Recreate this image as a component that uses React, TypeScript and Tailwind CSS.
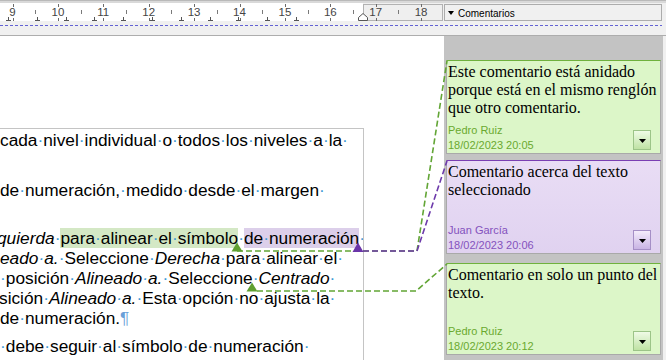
import React from 'react';

type Run = { t: string; i?: boolean; hl?: 'g' | 'p'; mark?: boolean };

// texto del documento, línea por línea (los puntos son los espacios visibles)
const docLines: { cls: string; runs: Run[] }[] = [
  { cls: 'mt-[1px]', runs: [{ t: 'cada·nivel·individual·o·todos·los·niveles·a·la·' }] },
  { cls: 'mt-[30px]', runs: [{ t: 'de·numeración,·medido·desde·el·margen·' }] },
  {
    cls: 'mt-[28px] -ml-[3px]',
    runs: [
      { t: 'quierda', i: true },
      { t: '·' },
      { t: 'para·alinear·el·símbolo', hl: 'g' },
      { t: '·' },
      { t: 'de·numeración', hl: 'p' },
      { t: '·' },
    ],
  },
  { cls: '', runs: [{ t: 'eado·a.', i: true }, { t: '·Seleccione·' }, { t: 'Derecha', i: true }, { t: '·para·alinear·el·' }] },
  { cls: '', runs: [{ t: '·posición·' }, { t: 'Alineado·a.', i: true }, { t: '·Seleccione·' }, { t: 'Centrado', i: true }, { t: '·' }] },
  { cls: '-ml-[1px]', runs: [{ t: 'sición·' }, { t: 'Alineado·a.', i: true }, { t: '·Esta·opción·no·ajusta·la·' }] },
  { cls: '', runs: [{ t: 'de·numeración.' }, { t: '¶', mark: true }] },
  { cls: 'mt-[8px]', runs: [{ t: '·debe·seguir·al·símbolo·de·numeración·' }] },
];

const Runs = ({ runs }: { runs: Run[] }) => (
  <>
    {runs.map((r, k) => {
      if (r.mark) return <span key={k} className="text-[#6a9fd8]">{r.t}</span>;
      const parts = r.t.split(/(·)/);
      const cls = [
        r.i ? 'italic' : '',
        r.hl === 'g' ? 'bg-[#d4e8c5]' : '',
        r.hl === 'p' ? 'bg-[#dccfea]' : '',
      ].join(' ');
      return (
        <span key={k} className={cls}>
          {parts.map((p, j) => (p === '·' ? <span key={j} className="text-[#3f9bd5]">·</span> : p))}
        </span>
      );
    })}
  </>
);

const Ruler = () => {
  const nums = [9, 10, 11, 12, 13, 14, 15, 16, 17, 18];
  const tabs = Array.from({ length: 11 }, (_, k) => Math.round(8 + k * 28.8) + 0.5);
  return (
    <svg width="443" height="18" className="block shrink-0">
      <rect x="0" y="0" width="363" height="18" fill="#ffffff" />
      <rect x="363.5" y="1.5" width="79" height="16" fill="#efefef" stroke="#b2b2b2" />
      {nums.map((n, k) => {
        const x = 12.5 + k * 45.4;
        const xi = Math.round(x) + 0.5;
        const mid = Math.round(x + 22.7) + 0.5;
        return (
          <g key={n}>
            <line x1={xi} y1="1" x2={xi} y2="4" stroke="#6b6b6b" />
            <line x1={xi} y1="15" x2={xi} y2="18" stroke="#6b6b6b" />
            {k < 9 && <line x1={mid} y1="7" x2={mid} y2="11" stroke="#7a7a7a" />}
            <text
              x={x}
              y="12.5"
              textAnchor="middle"
              fontSize="11.5"
              fill="#444444"
              fontFamily="'Liberation Sans', Arial, sans-serif"
            >
              {n}
            </text>
          </g>
        );
      })}
      {tabs.map((x) => (
        <g key={x} stroke="#555555">
          <line x1={x} y1="14" x2={x} y2="17.5" />
          <line x1={x - 2.5} y1="17.5" x2={x + 2.5} y2="17.5" />
        </g>
      ))}
      {/* sangría derecha */}
      <polygon points="363,10.5 367.5,14.5 367.5,17.5 358.5,17.5 358.5,14.5" fill="#ffffff" stroke="#555555" />
    </svg>
  );
};

type Tone = 'green' | 'purple';

const CommentCard = ({
  lines,
  author,
  date,
  tone,
  h,
  mt,
}: {
  lines: string[];
  author: string;
  date: string;
  tone: Tone;
  h: string;
  mt: string;
}) => {
  const green = tone === 'green';
  return (
    <div
      className={[
        'flex flex-col justify-between border border-[#a9a9a9]',
        h,
        mt,
        green ? 'border-t-[#6fb13d] bg-[#dcf6c8]' : 'border-t-[#7a3fb3] bg-gradient-to-b from-[#e9ddf5] to-[#e0d2f0]',
      ].join(' ')}
    >
      <div className="pl-[1px] pt-[2px] font-['Liberation_Serif',serif] text-[16px] leading-[18px] text-black">
        {lines.map((l) => (
          <div key={l} className="whitespace-nowrap">
            {l}
          </div>
        ))}
      </div>
      <div className="flex items-end justify-between">
        <div className={['pl-[1px] text-[11px] leading-[15px]', green ? 'text-[#6aa92f]' : 'text-[#8452bd]'].join(' ')}>
          <div>{author}</div>
          <div>{date}</div>
        </div>
        <div
          className={[
            'mb-[3px] mr-[9px] flex h-[20px] w-[18px] items-center justify-center border',
            green
              ? 'border-[#9cc488] bg-gradient-to-b from-[#effbe6] to-[#bfe2a4]'
              : 'border-[#a58fc6] bg-gradient-to-b from-[#f4ecfb] to-[#c9b4e4]',
          ].join(' ')}
        >
          <svg width="7" height="4" className="mt-[2px]">
            <polygon points="0,0 7,0 3.5,4" fill="#000000" />
          </svg>
        </div>
      </div>
    </div>
  );
};

export default function App() {
  return (
    <div className="relative h-[360px] w-[666px] overflow-hidden bg-[#f0f0f0] font-['Liberation_Sans',Arial,sans-serif]">
      {/* borde superior */}
      <div className="h-[3px] border-t border-[#b9b9b9] bg-[#d9d9d9]" />

      {/* regla */}
      <div className="flex h-[18px]">
        <Ruler />
        <div className="ml-[1px] mt-[1px] flex h-[17px] w-[218px] items-center gap-[4px] border border-[#acacac] bg-[#f0f0f0] pl-[3px] text-[10px] text-black">
          <svg width="6" height="4" className="mt-[1px]">
            <polygon points="0,0 6,0 3,4" fill="#000000" />
          </svg>
          <span className="pt-[1px]">Comentarios</span>
        </div>
      </div>

      {/* línea de límite punteada */}
      <div className="h-[15px] border-b border-[#adadad]">
        <svg width="662" height="14" className="block">
          <line x1="0" y1="4.5" x2="662" y2="4.5" stroke="#6262d4" strokeDasharray="3 2" />
        </svg>
      </div>

      <div className="flex h-[324px]">
        {/* documento */}
        <div className="w-[444px] overflow-hidden bg-white">
          <div className="mt-[92px] h-[300px] w-[364px] overflow-hidden border-r border-t border-[#c4c4c4] text-[17.3px] text-black">
            {docLines.map((l, k) => (
              <div key={k} className={['h-[20px] whitespace-nowrap leading-[20px]', l.cls].join(' ')}>
                <Runs runs={l.runs} />
              </div>
            ))}
          </div>
        </div>

        {/* panel de comentarios */}
        <div className="flex w-[219px] flex-col bg-[#c3c3c3] px-[2px]">
          <CommentCard
            tone="green"
            h="h-[94px]"
            mt="mt-[24px]"
            lines={['Este comentario está anidado', 'porque está en el mismo renglón', 'que otro comentario.']}
            author="Pedro Ruiz"
            date="18/02/2023 20:05"
          />
          <CommentCard
            tone="purple"
            h="h-[94px]"
            mt="mt-[6px]"
            lines={['Comentario acerca del texto', 'seleccionado']}
            author="Juan García"
            date="18/02/2023 20:06"
          />
          <CommentCard
            tone="green"
            h="h-[92px]"
            mt="mt-[9px]"
            lines={['Comentario en solo un punto del', 'texto.']}
            author="Pedro Ruiz"
            date="18/02/2023 20:12"
          />
        </div>
        <div className="w-[3px] bg-[#f0f0f0]" />
      </div>

      {/* anclas y conectores de los comentarios */}
      <svg width="666" height="360" className="pointer-events-none absolute left-0 top-0">
        <polyline points="237,251 417,251 447,61" fill="none" stroke="#62a535" strokeWidth="1.6" strokeDasharray="6 3" />
        <polyline
          points="358,251 417,251 447,161"
          fill="none"
          stroke="#6d3aab"
          strokeWidth="1.6"
          strokeDasharray="6 3"
          strokeDashoffset="4"
        />
        <polyline points="257,291 416,291 447,264" fill="none" stroke="#62a535" strokeWidth="1.6" strokeDasharray="6 3" />
        <polygon points="231.5,251.5 237,242.5 242.5,251.5" fill="#5f9f30" />
        <polygon points="352.5,252 358,242.5 363.5,252" fill="#6a35a8" />
        <polygon points="246.5,291.5 252,282.5 257.5,291.5" fill="#5f9f30" />
      </svg>
    </div>
  );
}
